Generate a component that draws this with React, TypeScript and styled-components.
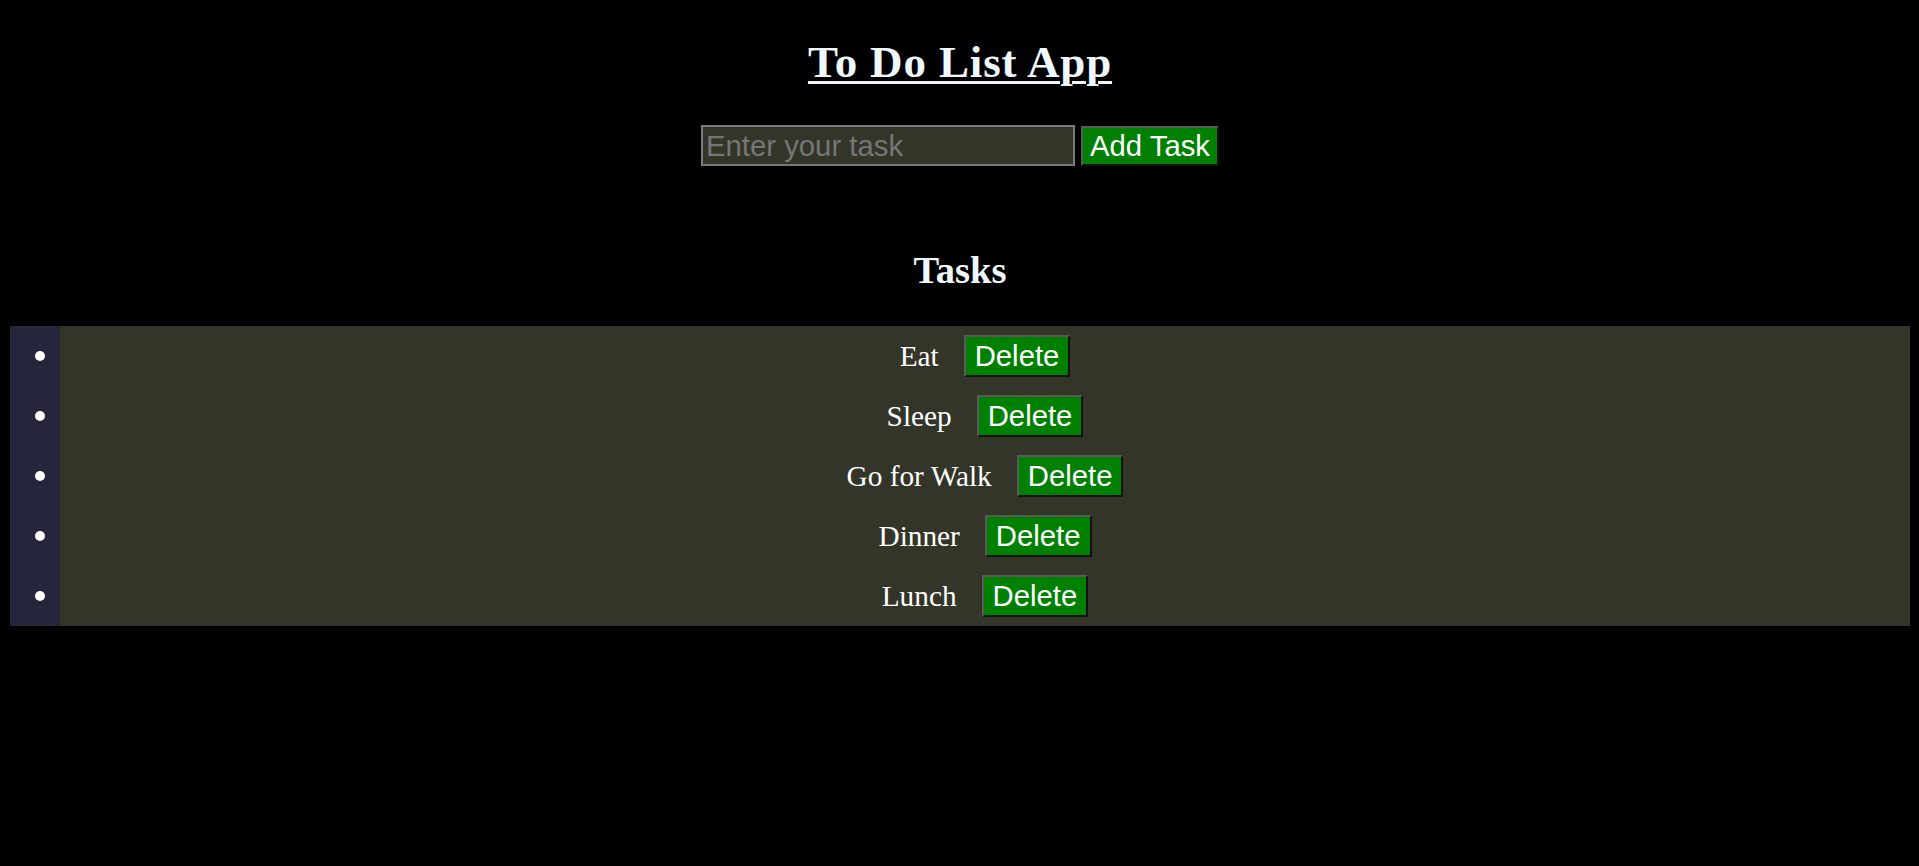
import styled, { createGlobalStyle } from "styled-components";

const GlobalStyle = createGlobalStyle`
  html, body {
    margin: 0;
    padding: 0;
    background-color: #000;
  }
  body {
    font-family: "Liberation Serif", "Times New Roman", serif;
    color: #fff;
  }
`;

const Container = styled.div`
  min-height: 866px;
  padding: 0 9px 0 10px;
  display: flex;
  flex-direction: column;
  align-items: stretch;
`;

const Title = styled.h1`
  margin: 36px 0 0;
  text-align: center;
  font-size: 45px;
  letter-spacing: 0.85px;
  font-weight: 700;
  line-height: normal;
  color: #f0f8ff;
  text-decoration: underline;
  text-decoration-thickness: 3px;
  text-underline-offset: 4px;
`;

const FormRow = styled.div`
  margin-top: 37px;
  display: flex;
  justify-content: center;
  align-items: center;
  gap: 6px;
`;

const TaskInput = styled.input`
  box-sizing: border-box;
  width: 374px;
  height: 41px;
  padding: 0 3px;
  border: 2px solid #7a7a7a;
  background-color: #333528;
  color: #fff;
  font-family: "Liberation Sans", Arial, sans-serif;
  font-size: 29.3px;
  outline: none;
  &::placeholder {
    color: #767676;
  }
`;

const Button = styled.button<{ $wide?: boolean }>`
  box-sizing: border-box;
  padding: ${(props) => (props.$wide ? "1px 7px" : "2px 9px")};
  border-width: 2px;
  border-style: solid;
  border-color: #5a5a5a #111 #111 #5a5a5a;
  background-color: #008000;
  color: #fff;
  font-family: "Liberation Sans", Arial, sans-serif;
  font-size: 29.3px;
  line-height: normal;
  cursor: pointer;
`;

const SubTitle = styled.h2`
  margin: 82px 0 0;
  text-align: center;
  font-size: 38.5px;
  font-weight: 700;
  line-height: normal;
  color: #f0f8ff;
`;

const TaskList = styled.ul`
  margin: 34px 0 0;
  padding: 0 0 0 50px;
  list-style: none;
  background-color: #25263c;
`;

const TaskItem = styled.li`
  position: relative;
  height: 60px;
  display: flex;
  justify-content: center;
  align-items: center;
  gap: 25px;
  background-color: #333528;
  font-size: 29.3px;
  color: #fff;
  &::before {
    content: "";
    position: absolute;
    left: -25px;
    top: 50%;
    width: 10px;
    height: 10px;
    margin-top: -5px;
    border-radius: 50%;
    background-color: #fff;
  }
`;

const tasks = ["Eat", "Sleep", "Go for Walk", "Dinner", "Lunch"];

function App() {
  return (
    <Container>
      <GlobalStyle />
      <Title>To Do List App</Title>
      <FormRow>
        <TaskInput type="text" placeholder="Enter your task" />
        <Button $wide>Add Task</Button>
      </FormRow>
      <SubTitle>Tasks</SubTitle>
      <TaskList>
        {tasks.map((task) => (
          <TaskItem key={task}>
            <span>{task}</span>
            <Button>Delete</Button>
          </TaskItem>
        ))}
      </TaskList>
    </Container>
  );
}

export default App;
